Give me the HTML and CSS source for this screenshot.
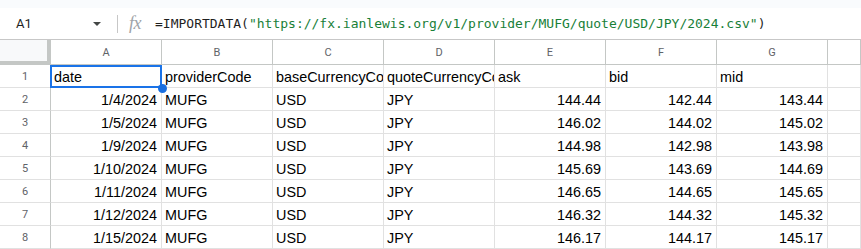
FILE: index.html
```html
<!DOCTYPE html>
<html lang="en">
<head>
    <meta charset="UTF-8">
    <meta name="viewport" content="width=device-width, initial-scale=1.0">
    <title>IMPORTDATA - Sheet</title>
    <link rel="stylesheet" href="styles.css">
</head>
<body>
    <div class="top-strip"></div>

    <!-- Formula bar -->
    <div class="formula-bar">
        <div class="name-box">
            <span class="cell-ref">A1</span>
            <span class="caret"></span>
        </div>
        <div class="bar-sep"></div>
        <span class="fx">fx</span>
        <div class="formula">=IMPORTDATA(<span class="str">"https://fx.ianlewis.org/v1/provider/MUFG/quote/USD/JPY/2024.csv"</span>)</div>
    </div>

    <!-- Sheet grid -->
    <div class="sheet">
        <div class="corner"></div>
        <div class="col-head">A</div>
        <div class="col-head">B</div>
        <div class="col-head">C</div>
        <div class="col-head">D</div>
        <div class="col-head">E</div>
        <div class="col-head">F</div>
        <div class="col-head">G</div>
        <div class="col-head"></div>

        <div class="row-head">1</div>
        <div class="cell selected">date<span class="sel-box"></span><span class="sel-handle"></span></div>
        <div class="cell">providerCode</div>
        <div class="cell">baseCurrencyCode</div>
        <div class="cell">quoteCurrencyCode</div>
        <div class="cell">ask</div>
        <div class="cell">bid</div>
        <div class="cell">mid</div>
        <div class="cell"></div>

        <div class="row-head">2</div>
        <div class="cell num">1/4/2024</div>
        <div class="cell">MUFG</div>
        <div class="cell">USD</div>
        <div class="cell">JPY</div>
        <div class="cell num">144.44</div>
        <div class="cell num">142.44</div>
        <div class="cell num">143.44</div>
        <div class="cell"></div>

        <div class="row-head">3</div>
        <div class="cell num">1/5/2024</div>
        <div class="cell">MUFG</div>
        <div class="cell">USD</div>
        <div class="cell">JPY</div>
        <div class="cell num">146.02</div>
        <div class="cell num">144.02</div>
        <div class="cell num">145.02</div>
        <div class="cell"></div>

        <div class="row-head">4</div>
        <div class="cell num">1/9/2024</div>
        <div class="cell">MUFG</div>
        <div class="cell">USD</div>
        <div class="cell">JPY</div>
        <div class="cell num">144.98</div>
        <div class="cell num">142.98</div>
        <div class="cell num">143.98</div>
        <div class="cell"></div>

        <div class="row-head">5</div>
        <div class="cell num">1/10/2024</div>
        <div class="cell">MUFG</div>
        <div class="cell">USD</div>
        <div class="cell">JPY</div>
        <div class="cell num">145.69</div>
        <div class="cell num">143.69</div>
        <div class="cell num">144.69</div>
        <div class="cell"></div>

        <div class="row-head">6</div>
        <div class="cell num">1/11/2024</div>
        <div class="cell">MUFG</div>
        <div class="cell">USD</div>
        <div class="cell">JPY</div>
        <div class="cell num">146.65</div>
        <div class="cell num">144.65</div>
        <div class="cell num">145.65</div>
        <div class="cell"></div>

        <div class="row-head">7</div>
        <div class="cell num">1/12/2024</div>
        <div class="cell">MUFG</div>
        <div class="cell">USD</div>
        <div class="cell">JPY</div>
        <div class="cell num">146.32</div>
        <div class="cell num">144.32</div>
        <div class="cell num">145.32</div>
        <div class="cell"></div>

        <div class="row-head">8</div>
        <div class="cell num">1/15/2024</div>
        <div class="cell">MUFG</div>
        <div class="cell">USD</div>
        <div class="cell">JPY</div>
        <div class="cell num">146.17</div>
        <div class="cell num">144.17</div>
        <div class="cell num">145.17</div>
        <div class="cell"></div>
    </div>
</body>
</html>
```

FILE: styles.css
```css
/* Page */
body {
    margin: 0;
    width: 861px;
    height: 249px;
    overflow: hidden;
    background-color: #fff;
    font-family: Roboto, "Liberation Sans", Arial, sans-serif;
}

.top-strip {
    height: 8px;
    background-color: #f9fbfd;
}

/* Formula bar */
.formula-bar {
    display: flex;
    align-items: center;
    height: 31px;
    border-bottom: 1px solid #c7c7c7;
}

.name-box {
    display: flex;
    align-items: center;
    width: 105px;
    padding-left: 16px;
    box-sizing: border-box;
}

.cell-ref {
    font-size: 13px;
    color: #1f1f1f;
    flex: 1;
}

.caret {
    width: 0;
    height: 0;
    border-left: 4px solid transparent;
    border-right: 4px solid transparent;
    border-top: 4px solid #444746;
    margin-right: 4px;
}

.bar-sep {
    width: 1px;
    height: 18px;
    background-color: #c7c7c7;
    margin-left: 12px;
}

.fx {
    font-family: "Liberation Serif", serif;
    font-style: italic;
    font-size: 18px;
    color: #a0a4a8;
    margin-left: 11px;
    width: 26px;
    letter-spacing: -0.5px;
}

.formula {
    font-family: "DejaVu Sans Mono", "Liberation Mono", monospace;
    font-size: 13px;
    color: #1f1f1f;
    white-space: nowrap;
}

.formula .str {
    color: #188038;
}

/* Grid */
.sheet {
    display: grid;
    grid-template-columns: 51px repeat(7, 111px) 1fr;
    grid-template-rows: 25px repeat(8, 23px);
}

.corner {
    background-color: #f8f9fa;
    border-right: 4px solid #c4c7c5;
    border-bottom: 4px solid #c4c7c5;
}

.col-head {
    display: flex;
    align-items: center;
    justify-content: center;
    font-size: 11px;
    color: #5f6368;
    border-right: 1px solid #c4c7c5;
    border-bottom: 1px solid #c4c7c5;
}

.row-head {
    display: flex;
    align-items: center;
    justify-content: center;
    font-size: 11px;
    color: #5f6368;
    border-right: 1px solid #c4c7c5;
    border-bottom: 1px solid #e1e1e1;
}

.cell {
    position: relative;
    padding: 1px 3px 0 3px;
    font-family: "Liberation Sans", Arial, sans-serif;
    font-size: 14.4px;
    line-height: 22px;
    color: #000;
    white-space: nowrap;
    overflow: hidden;
    border-right: 1px solid #e1e1e1;
    border-bottom: 1px solid #e1e1e1;
}

.cell.num {
    text-align: right;
    padding-right: 4px;
}

.cell.selected {
    overflow: visible;
    z-index: 1;
}

/* Active cell highlight */
.sel-box {
    position: absolute;
    left: -1px;
    top: 0;
    right: -1px;
    bottom: -1px;
    border: 2px solid #1a73e8;
}

.sel-handle {
    position: absolute;
    right: -6px;
    bottom: -6px;
    width: 9px;
    height: 9px;
    border-radius: 50%;
    background-color: #1a6fe0;
}
```
